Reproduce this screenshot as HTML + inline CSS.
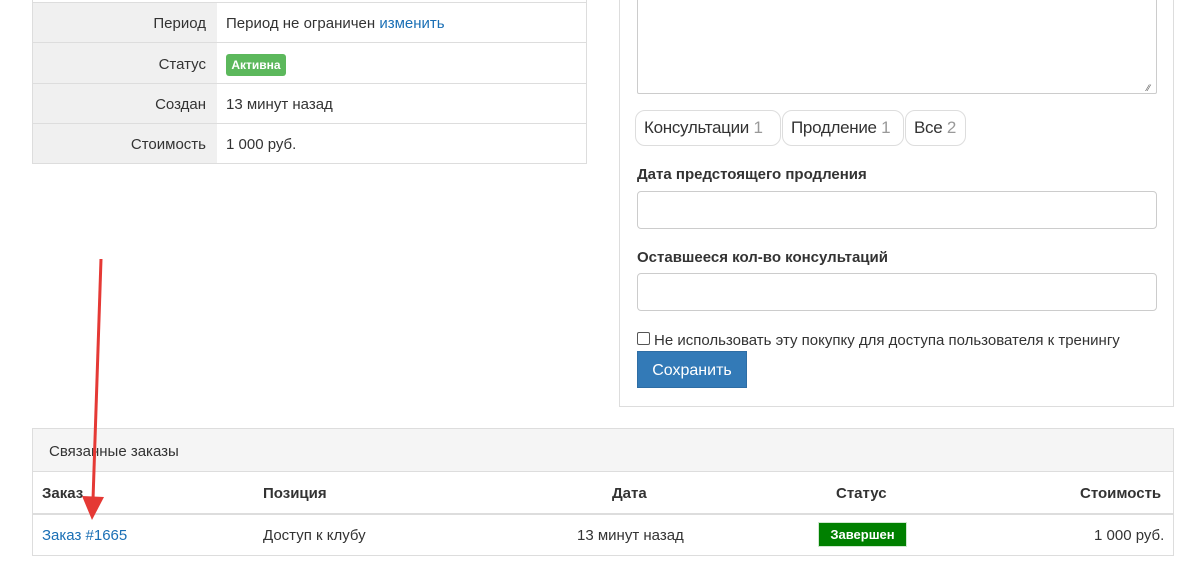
<!DOCTYPE html>
<html><head><meta charset="utf-8"><style>
*{box-sizing:border-box;margin:0;padding:0}
body{width:1200px;height:572px;background:#fff;font-family:"Liberation Sans","Noto Sans CJK SC",sans-serif;color:#333;font-size:15px;position:relative;overflow:hidden}
.a{position:absolute;white-space:nowrap}
.lab{position:absolute;left:33px;width:184px;background:#f0f0f0;text-align:right;padding-right:11px;height:40px;line-height:44px}
.val{position:absolute;left:226px;height:40px;line-height:44px;white-space:nowrap}
.hl{position:absolute;left:32px;width:555px;height:1px;background:#ddd}
.inp{position:absolute;left:637px;width:520px;border:1px solid #ccc;border-radius:4px;background:#fff}
.tab{position:absolute;top:110px;height:36px;border:1px solid #ddd;border-radius:10px;line-height:34px;font-size:17px;padding-left:8px;color:#333;white-space:nowrap;letter-spacing:-0.3px}
.tab span{color:#999}
.b{font-weight:bold}
</style></head><body>
<div class="a" style="left:32px;top:0;width:555px;height:164px;border:1px solid #ddd;border-top:none"></div>
<div class="lab" style="top:2px">Период</div><div class="val" style="top:2px">Период не ограничен <span style="color:#1a6fb5">изменить</span></div>
<div class="lab" style="top:43px">Статус</div>
<div class="a" style="left:226px;top:54px;width:60px;height:22px;background:#5cb85c;color:#fff;font-size:12px;font-weight:bold;line-height:22px;text-align:center;border-radius:3px">Активна</div>
<div class="lab" style="top:83px">Создан</div><div class="val" style="top:83px">13 минут назад</div>
<div class="lab" style="top:123px">Стоимость</div><div class="val" style="top:123px">1 000 руб.</div>
<div class="hl" style="top:2px"></div><div class="hl" style="top:42px"></div><div class="hl" style="top:83px"></div><div class="hl" style="top:123px"></div><div class="hl" style="top:163px"></div>

<div class="a" style="left:619px;top:-2px;width:555px;height:409px;border:1px solid #ddd"></div>
<div class="inp" style="top:-4px;height:98px;border-radius:0 0 2px 2px"></div>
<div class="a" style="left:1147px;top:83px;font-size:9px;color:#555">⁄⁄</div>
<div class="tab" style="left:635px;width:146px">Консультации <span>1</span></div>
<div class="tab" style="left:782px;width:122px">Продление <span>1</span></div>
<div class="tab" style="left:905px;width:61px">Все <span>2</span></div>
<div class="a b" style="left:637px;top:166px;font-size:15px">Дата предстоящего продления</div>
<div class="inp" style="top:191px;height:38px"></div>
<div class="a b" style="left:637px;top:249px;font-size:15px">Оставшееся кол-во консультаций</div>
<div class="inp" style="top:273px;height:38px"></div>
<div class="a" style="left:637px;top:332px;width:13px;height:13px;border:1px solid #555;border-radius:2px"></div>
<div class="a" style="left:654px;top:332px;font-size:15px">Не использовать эту покупку для доступа пользователя к тренингу</div>
<div class="a" style="left:637px;top:351px;width:110px;height:37px;background:#337ab7;border:1px solid #2e6da4;color:#fff;font-size:16px;line-height:37px;text-align:center">Сохранить</div>

<div class="a" style="left:32px;top:428px;width:1142px;height:128px;border:1px solid #ddd"></div>
<div class="a" style="left:33px;top:429px;width:1140px;height:43px;background:#f5f5f5;border-bottom:1px solid #ddd;padding-left:16px;line-height:45px;font-size:15px">Связанные заказы</div>
<div class="a" style="left:33px;top:513px;width:1140px;height:2px;background:#ddd"></div>
<div class="a b" style="left:42px;top:485px">Заказ</div>
<div class="a b" style="left:263px;top:485px">Позиция</div>
<div class="a b" style="left:612px;top:485px">Дата</div>
<div class="a b" style="left:836px;top:485px">Статус</div>
<div class="a b" style="left:1080px;top:485px">Стоимость</div>
<div class="a" style="left:42px;top:527px;color:#1a6fb5">Заказ #1665</div>
<div class="a" style="left:263px;top:527px">Доступ к клубу</div>
<div class="a" style="left:577px;top:527px">13 минут назад</div>
<div class="a b" style="left:818px;top:522px;width:89px;height:25px;background:#008000;border:1px solid #cfe8cf;color:#fff;font-size:13px;line-height:23px;text-align:center">Завершен</div>
<div class="a" style="left:1094px;top:527px">1 000 руб.</div>

<svg class="a" style="left:0;top:0" width="1200" height="572"><line x1="101" y1="259" x2="93" y2="500" stroke="#e53935" stroke-width="3"/><polygon points="82,496 104,497 92,520" fill="#e53935"/></svg>
</body></html>
